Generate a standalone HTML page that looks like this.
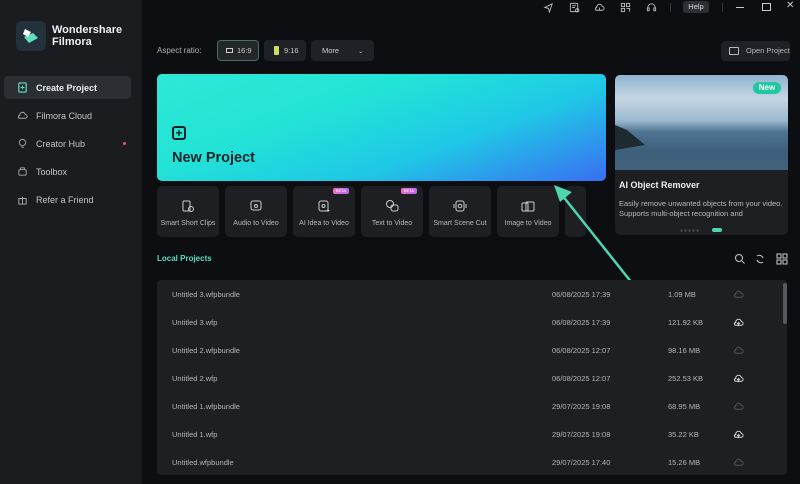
<!DOCTYPE html>
<html><head><meta charset="utf-8"><style>
*{margin:0;padding:0;box-sizing:border-box}
body{width:800px;height:484px;background:#0c0e11;font-family:"Liberation Sans",sans-serif;color:#d8dadd;position:relative;overflow:hidden}
.side{position:absolute;left:0;top:0;width:142px;height:484px;background:#1a1c1f}
.abs{position:absolute}
.nav{position:absolute;left:4px;width:127px;height:23px;font-size:9px;color:#c4c6c9;display:flex;align-items:center;padding-left:13px;gap:8px}
.nav svg{width:11px;height:11px}
.tile{position:absolute;top:186px;width:62px;height:51px;background:#1d1f23;border-radius:5px;font-size:7px;color:#b8babd;text-align:center}
.tile svg{position:absolute;left:24px;top:13px;width:14px;height:14px}
.tile span{position:absolute;left:0;right:0;top:34px;white-space:nowrap}
.beta{position:absolute;top:2px;right:6px;width:16px;height:6px;background:linear-gradient(90deg,#f06fc0,#b46cf0);border-radius:2px;font-size:4px;color:#fff;line-height:6px}
.row{position:absolute;left:172px;font-size:7.5px;color:#b4b6b9;width:600px;height:10px}
.row .d{position:absolute;left:380px}.row .s{position:absolute;left:496px}
.row svg{position:absolute;left:561px;top:-1px;width:11px;height:11px}
.ti{position:absolute;top:2px;width:11px;height:11px}
</style></head><body>
<div class="side">
 <div class="abs" style="left:16px;top:21px;width:30px;height:30px;background:#22313a;border-radius:6px">
  <svg width="30" height="30"><path d="M8 16 L17 12 L22 17 L13 22Z" fill="#5fe0bd"/><path d="M9 8 L15 11 L12 16 L7 13Z" fill="#fff"/></svg></div>
 <div class="abs" style="left:52px;top:24px;font-size:11px;font-weight:bold;color:#f0f0f0;line-height:12px">Wondershare<br>Filmora</div>
 <div class="nav" style="top:76px;background:#2b2e33;border-radius:4px;color:#eee;font-weight:bold"><svg viewBox="0 0 12 12"><rect x="2" y="1" width="8" height="10" rx="1" fill="none" stroke="#5fe0bd" stroke-width="1.3"/><path d="M6 4v4M4 6h4" stroke="#5fe0bd" stroke-width="1.2"/></svg>Create Project</div>
 <div class="nav" style="top:104px"><svg viewBox="0 0 12 12"><path d="M3 9h6a2 2 0 0 0 0-4 3 3 0 0 0-6 1 1.5 1.5 0 0 0 0 3z" fill="none" stroke="#aaa"/></svg>Filmora Cloud</div>
 <div class="nav" style="top:132px"><svg viewBox="0 0 12 12"><circle cx="6" cy="5" r="3.5" fill="none" stroke="#aaa"/><path d="M4.5 10h3" stroke="#aaa"/></svg>Creator Hub</div>
 <div class="abs" style="left:123px;top:142px;width:3px;height:3px;border-radius:50%;background:#f0506e"></div>
 <div class="nav" style="top:160px"><svg viewBox="0 0 12 12"><rect x="2" y="4" width="8" height="6" rx="1" fill="none" stroke="#aaa"/><path d="M4 4V2h4v2" fill="none" stroke="#aaa"/></svg>Toolbox</div>
 <div class="nav" style="top:188px"><svg viewBox="0 0 12 12"><rect x="2" y="5" width="8" height="6" fill="none" stroke="#aaa"/><path d="M1.5 5h9M6 3v8" stroke="#aaa"/></svg>Refer a Friend</div>
</div>
<!-- top bar icons -->
<svg class="ti" style="left:543px" viewBox="0 0 12 12" fill="none" stroke="#bbb"><path d="M10 2L2 6l4 1 1 4z"/></svg>
<svg class="ti" style="left:569px" viewBox="0 0 12 12" fill="none" stroke="#bbb"><rect x="1.5" y="1.5" width="8" height="9" rx="1"/><path d="M3.5 4h4M3.5 6h3"/><circle cx="9" cy="9" r="1.8"/></svg>
<svg class="ti" style="left:594px" viewBox="0 0 12 12" fill="none" stroke="#bbb"><path d="M3 9h6a2 2 0 0 0 0-4 3 3 0 0 0-6 1 1.5 1.5 0 0 0 0 3z M6 9V6"/></svg>
<svg class="ti" style="left:620px" viewBox="0 0 12 12" fill="none" stroke="#bbb"><rect x="1.5" y="1.5" width="3.5" height="3.5"/><rect x="7" y="1.5" width="3.5" height="3.5"/><rect x="1.5" y="7" width="3.5" height="3.5"/><path d="M7 7h3.5v3.5"/></svg>
<svg class="ti" style="left:646px" viewBox="0 0 12 12" fill="none" stroke="#bbb"><path d="M2 7V6a4 4 0 0 1 8 0v1"/><rect x="1.5" y="6.5" width="2" height="3"/><rect x="8.5" y="6.5" width="2" height="3"/></svg>
<div class="abs" style="left:670px;top:3px;width:1px;height:9px;background:#333"></div>
<div class="abs" style="left:683px;top:1px;width:26px;height:12px;background:#2c2f33;border-radius:3px;font-size:7.5px;color:#ddd;text-align:center;line-height:12px">Help</div>
<div class="abs" style="left:722px;top:3px;width:1px;height:9px;background:#333"></div>
<div class="abs" style="left:736px;top:7px;width:8px;height:1px;background:#ccc"></div>
<div class="abs" style="left:762px;top:3px;width:9px;height:8px;border:1px solid #ccc"></div>
<div class="abs" style="left:786px;top:0px;font-size:10px;color:#ccc">✕</div>
<div class="abs" style="left:157px;top:46px;font-size:8px;color:#b0b2b5">Aspect ratio:</div>
<div class="abs" style="left:217px;top:40px;width:42px;height:21px;border:1px solid #4d6b65;background:#23272a;border-radius:4px;font-size:7.5px;color:#ccc;line-height:19px;padding-left:19px">16:9<span class="abs" style="left:8px;top:7px;width:7px;height:5px;border:1px solid #ccc"></span></div>
<div class="abs" style="left:264px;top:40px;width:42px;height:21px;background:#1e2125;border-radius:4px;font-size:7.5px;color:#ccc;line-height:21px;padding-left:20px">9:16<span class="abs" style="left:10px;top:6px;width:5px;height:9px;background:#c9e05f;border-radius:1px"></span></div>
<div class="abs" style="left:311px;top:40px;width:63px;height:21px;background:#1e2125;border-radius:4px;font-size:7.5px;color:#ccc;line-height:21px;padding-left:11px">More <span style="margin-left:17px;font-size:6px">⌄</span></div>
<div class="abs" style="left:721px;top:41px;width:69px;height:20px;background:#1e2125;border-radius:4px;font-size:7.5px;color:#bbb;line-height:20px;padding-left:25px">Open Project<span class="abs" style="left:8px;top:6px;width:10px;height:8px;border:1px solid #bbb;border-radius:1px"></span></div>
<!-- new project -->
<div class="abs" style="left:157px;top:74px;width:449px;height:107px;border-radius:5px;background:linear-gradient(160deg,#2ee8d6 0%,#22e4d6 35%,#1fc8e6 65%,#3a6ef2 100%)"></div>
<div class="abs" style="left:172px;top:126px;width:14px;height:14px;border:2px solid #122;border-radius:3px;font-size:12px;font-weight:bold;color:#122;line-height:10px;text-align:center">+</div>
<div class="abs" style="left:172px;top:150px;font-size:14.5px;font-weight:bold;color:#14242a">New Project</div>
<!-- promo -->
<div class="abs" style="left:615px;top:75px;width:173px;height:160px;background:#1d1f23;border-radius:5px;overflow:hidden">
 <div style="height:95px;background:linear-gradient(180deg,#8fb3d1 0%,#c5d6e2 25%,#9ab8cf 48%,#4f7491 60%,#3d5f7b 80%,#42627c 100%)"></div>
 <div class="abs" style="left:0;top:50px;width:30px;height:25px;background:#1d2a30;clip-path:polygon(0 0,40% 20%,100% 80%,0 100%)"></div>
 <div class="abs" style="left:138px;top:7px;width:28px;height:12px;background:#1fc8a0;border-radius:6px;font-size:8px;font-weight:bold;color:#fff;text-align:center;line-height:12px">New</div>
 <div class="abs" style="left:4px;top:105px;font-size:9px;font-weight:bold;color:#eee">AI Object Remover</div>
 <div class="abs" style="left:4px;top:124px;width:166px;height:20px;overflow:hidden;font-size:7.5px;color:#b8babd;line-height:10px">Easily remove unwanted objects from your video. Supports multi-object recognition and</div>
 <div class="abs" style="left:65px;top:153px;font-size:5px;color:#555;letter-spacing:1px">●●●●●</div>
 <div class="abs" style="left:97px;top:153px;width:10px;height:4px;background:#4fd6b0;border-radius:2px"></div>
</div>
<!-- tiles -->
<div class="tile" style="left:157px"><svg viewBox="0 0 14 14" fill="none" stroke="#ccc"><rect x="2" y="2" width="7" height="10" rx="1"/><circle cx="10" cy="10" r="2.5"/></svg><span>Smart Short Clips</span></div>
<div class="tile" style="left:225px"><svg viewBox="0 0 14 14" fill="none" stroke="#ccc"><rect x="2" y="2" width="10" height="9" rx="2"/><circle cx="7" cy="7" r="1.5"/></svg><span>Audio to Video</span></div>
<div class="tile" style="left:293px"><div class="beta">BETA</div><svg viewBox="0 0 14 14" fill="none" stroke="#ccc"><rect x="2" y="2" width="9" height="10" rx="2"/><circle cx="6.5" cy="7" r="1.5"/><path d="M11 10v3M9.5 11.5h3"/></svg><span>AI Idea to Video</span></div>
<div class="tile" style="left:361px"><div class="beta">BETA</div><svg viewBox="0 0 14 14" fill="none" stroke="#ccc"><circle cx="5" cy="5" r="3.5"/><rect x="6" y="6" width="7" height="6" rx="2"/></svg><span>Text to Video</span></div>
<div class="tile" style="left:429px"><svg viewBox="0 0 14 14" fill="none" stroke="#ccc"><rect x="3" y="2" width="8" height="10" rx="2"/><circle cx="7" cy="7" r="1.8"/><path d="M1 5v4M13 5v4"/></svg><span>Smart Scene Cut</span></div>
<div class="tile" style="left:497px"><svg viewBox="0 0 14 14" fill="none" stroke="#ccc"><rect x="1" y="4" width="6" height="8" rx="1"/><rect x="5" y="3" width="8" height="9" rx="1"/></svg><span>Image to Video</span></div>
<div class="tile" style="left:565px;width:21px"></div>
<!-- arrow -->
<svg class="abs" style="left:540px;top:180px" width="110" height="110"><path d="M92 103 L18 10" stroke="#4fd6b0" stroke-width="2.5"/><path d="M14 5 L32 12 L20 22Z" fill="#4fd6b0"/></svg>
<!-- local projects -->
<div class="abs" style="left:157px;top:254px;font-size:8px;font-weight:bold;color:#5fdcc0">Local Projects</div>
<svg class="abs" style="left:734px;top:253px" width="54" height="12" fill="none" stroke="#ccc"><circle cx="5" cy="5" r="3.5"/><path d="M8 8l2.5 2.5"/><path d="M23 3a4 4 0 0 1 6 2M29 9a4 4 0 0 1-6-2"/><rect x="43" y="1" width="4" height="4"/><rect x="49" y="1" width="4" height="4"/><rect x="43" y="7" width="4" height="4"/><rect x="49" y="7" width="4" height="4"/></svg>
<div class="abs" style="left:157px;top:280px;width:630px;height:195px;background:#1d1f23;border-radius:4px"></div>
<div class="abs" style="left:783px;top:283px;width:4px;height:41px;background:#55585c;border-radius:2px"></div>
<div class="row" style="top:290px"><span>Untitled 3.wfpbundle</span><span class="d">06/08/2025 17:39</span><span class="s">1.09 MB</span><svg viewBox="0 0 12 12" fill="none" stroke="#555"><path d="M3 9h6a2 2 0 0 0 0-4 3 3 0 0 0-6 1 1.5 1.5 0 0 0 0 3z"/></svg></div>
<div class="row" style="top:318px"><span>Untitled 3.wfp</span><span class="d">06/08/2025 17:39</span><span class="s">121.92 KB</span><svg viewBox="0 0 12 12" fill="none" stroke="#ddd"><path d="M3 9h6a2 2 0 0 0 0-4 3 3 0 0 0-6 1 1.5 1.5 0 0 0 0 3z M6 10V6M4.5 7.5L6 6l1.5 1.5"/></svg></div>
<div class="row" style="top:346px"><span>Untitled 2.wfpbundle</span><span class="d">06/08/2025 12:07</span><span class="s">98.16 MB</span><svg viewBox="0 0 12 12" fill="none" stroke="#555"><path d="M3 9h6a2 2 0 0 0 0-4 3 3 0 0 0-6 1 1.5 1.5 0 0 0 0 3z"/></svg></div>
<div class="row" style="top:374px"><span>Untitled 2.wfp</span><span class="d">06/08/2025 12:07</span><span class="s">252.53 KB</span><svg viewBox="0 0 12 12" fill="none" stroke="#ddd"><path d="M3 9h6a2 2 0 0 0 0-4 3 3 0 0 0-6 1 1.5 1.5 0 0 0 0 3z M6 10V6M4.5 7.5L6 6l1.5 1.5"/></svg></div>
<div class="row" style="top:402px"><span>Untitled 1.wfpbundle</span><span class="d">29/07/2025 19:08</span><span class="s">68.95 MB</span><svg viewBox="0 0 12 12" fill="none" stroke="#555"><path d="M3 9h6a2 2 0 0 0 0-4 3 3 0 0 0-6 1 1.5 1.5 0 0 0 0 3z"/></svg></div>
<div class="row" style="top:430px"><span>Untitled 1.wfp</span><span class="d">29/07/2025 19:08</span><span class="s">35.22 KB</span><svg viewBox="0 0 12 12" fill="none" stroke="#ddd"><path d="M3 9h6a2 2 0 0 0 0-4 3 3 0 0 0-6 1 1.5 1.5 0 0 0 0 3z M6 10V6M4.5 7.5L6 6l1.5 1.5"/></svg></div>
<div class="row" style="top:458px"><span>Untitled.wfpbundle</span><span class="d">29/07/2025 17:40</span><span class="s">15.26 MB</span><svg viewBox="0 0 12 12" fill="none" stroke="#555"><path d="M3 9h6a2 2 0 0 0 0-4 3 3 0 0 0-6 1 1.5 1.5 0 0 0 0 3z"/></svg></div>
</body></html>
